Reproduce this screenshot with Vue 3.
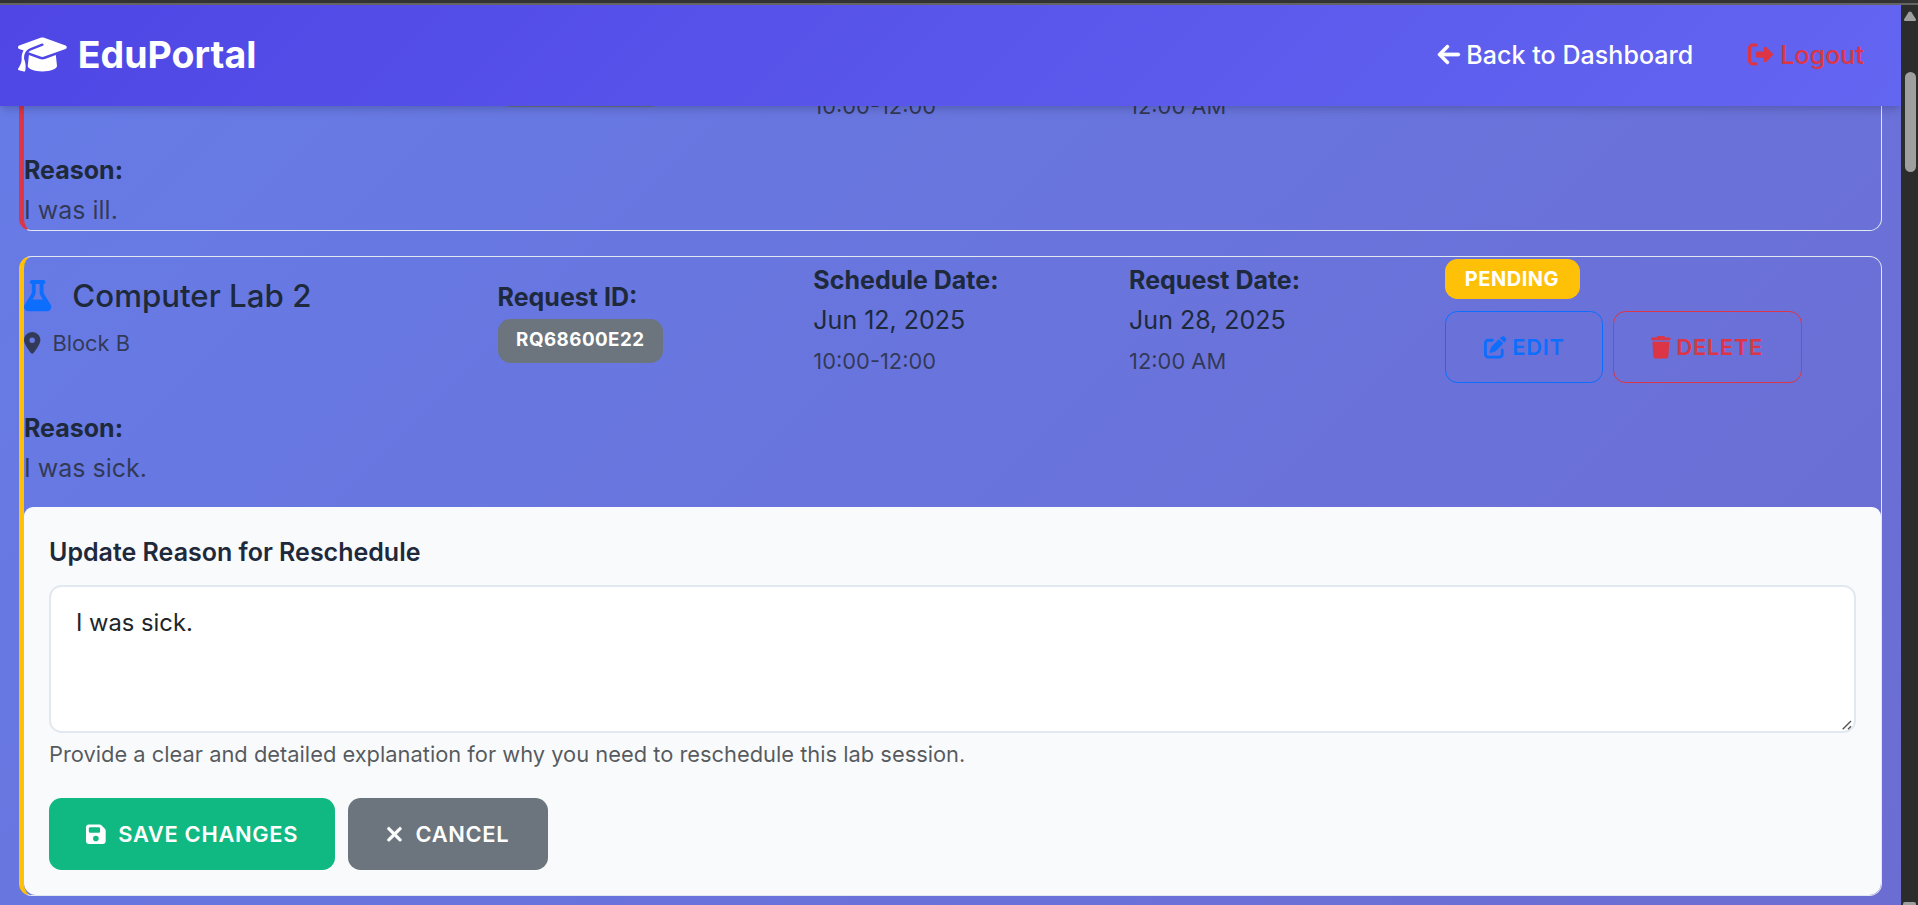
<script setup>
import { h, ref } from 'vue'

const reason = ref('I was sick.')

const shapes = {
  cap: [640, 'M320 32c-8.1 0-16.1 1.4-23.7 4.1L15.8 137.4C6.3 140.9 0 149.9 0 160s6.3 19.1 15.8 22.6l57.9 20.9C57.3 229.3 48 259.8 48 291.9v28.1c0 28.4-10.8 57.7-22.3 80.8c-6.5 13-13.9 25.8-22.5 37.6C0 442.7-.9 448.3 .9 453.4s6 8.9 11.2 10.2l64 16c4.2 1.1 8.7 .3 12.4-2s6.3-6.1 7.1-10.4c8.6-42.8 4.3-81.2-2.1-108.7C90.3 344.3 86 329.8 80 316.5V291.9c0-30.2 10.2-58.7 27.9-81.5c12.9-15.5 29.6-28 49.2-35.7l157-61.7c8.2-3.2 17.5 .8 20.7 9s-.8 17.5-9 20.7l-157 61.7c-12.4 4.9-23.3 12.4-32.2 21.6l159.6 57.6c7.6 2.7 15.6 4.1 23.7 4.1s16.1-1.4 23.7-4.1L624.2 182.6c9.5-3.4 15.8-12.5 15.8-22.6s-6.3-19.1-15.8-22.6L343.7 36.1C336.1 33.4 328.1 32 320 32zM128 408c0 35.3 86 72 192 72s192-36.7 192-72L496.7 262.6 354.5 314c-11.1 4-22.8 6-34.5 6s-23.5-2-34.5-6L143.3 262.6 128 408z'],
  back: [448, 'M9.4 233.4c-12.5 12.5-12.5 32.8 0 45.3l160 160c12.5 12.5 32.8 12.5 45.3 0s12.5-32.8 0-45.3L109.2 288 416 288c17.7 0 32-14.3 32-32s-14.3-32-32-32l-306.7 0L214.6 118.6c12.5-12.5 12.5-32.8 0-45.3s-32.8-12.5-45.3 0l-160 160z'],
  logout: [512, 'M377.9 105.9L500.7 228.7c7.2 7.2 11.3 17.1 11.3 27.3s-4.1 20.1-11.3 27.3L377.9 406.1c-6.4 6.4-15 9.9-24 9.9c-18.7 0-33.9-15.2-33.9-33.9l0-62.1-128 0c-17.7 0-32-14.3-32-32l0-64c0-17.7 14.3-32 32-32l128 0 0-62.1c0-18.7 15.2-33.9 33.9-33.9c9 0 17.6 3.6 24 9.9zM160 96L96 96c-17.7 0-32 14.3-32 32l0 256c0 17.7 14.3 32 32 32l64 0c17.7 0 32 14.3 32 32s-14.3 32-32 32l-64 0c-53 0-96-43-96-96L0 128C0 75 43 32 96 32l64 0c17.7 0 32 14.3 32 32s-14.3 32-32 32z'],
  flask: [448, 'M288 0H160 128C110.3 0 96 14.3 96 32s14.3 32 32 32V196.8c0 11.8-3.3 23.5-9.5 33.5L10.3 406.2C3.6 417.2 0 429.7 0 442.6C0 480.9 31.1 512 69.4 512H378.6c38.3 0 69.4-31.1 69.4-69.4c0-12.8-3.6-25.4-10.3-36.4L329.5 230.4c-6.2-10.1-9.5-21.7-9.5-33.5V64c17.7 0 32-14.3 32-32s-14.3-32-32-32H288zM192 196.8V64h64V196.8c0 23.7 6.6 46.9 19 67.1L309.5 320h-171L173 263.9c12.4-20.2 19-43.4 19-67.1z'],
  pin: [384, 'M215.7 499.2C267 435 384 279.4 384 192C384 86 298 0 192 0S0 86 0 192c0 87.4 117 243 168.3 307.2c12.3 15.3 35.1 15.3 47.4 0zM192 128a64 64 0 1 1 0 128 64 64 0 1 1 0-128z'],
  edit: [512, 'M471.6 21.7c-21.9-21.9-57.3-21.9-79.2 0L362.3 51.7l97.9 97.9 30.1-30.1c21.9-21.9 21.9-57.3 0-79.2L471.6 21.7zm-299.2 220c-6.1 6.1-10.8 13.6-13.5 21.9l-29.6 88.8c-2.9 8.6-.6 18.1 5.8 24.6s15.9 8.7 24.6 5.8l88.8-29.6c8.2-2.7 15.7-7.4 21.9-13.5L437.7 172.3 339.7 74.3 172.4 241.7zM96 64C43 64 0 107 0 160V416c0 53 43 96 96 96H352c53 0 96-43 96-96V320c0-17.7-14.3-32-32-32s-32 14.3-32 32v96c0 17.7-14.3 32-32 32H96c-17.7 0-32-14.3-32-32V160c0-17.7 14.3-32 32-32h96c17.7 0 32-14.3 32-32s-14.3-32-32-32H96z'],
  trash: [448, 'M135.2 17.7L128 32H32C14.3 32 0 46.3 0 64S14.3 96 32 96H416c17.7 0 32-14.3 32-32s-14.3-32-32-32H320l-7.2-14.3C307.4 6.8 296.3 0 284.2 0H163.8c-12.1 0-23.2 6.8-28.6 17.7zM416 128H32L53.2 467c1.6 25.3 22.6 45 47.9 45H346.9c25.3 0 46.3-19.7 47.9-45L416 128z'],
  save: [448, 'M64 32C28.7 32 0 60.7 0 96V416c0 35.3 28.7 64 64 64H384c35.3 0 64-28.7 64-64V173.3c0-17-6.7-33.3-18.7-45.3L352 50.7C340 38.7 323.7 32 306.7 32H64zm0 96c0-17.7 14.3-32 32-32H288c17.7 0 32 14.3 32 32v64c0 17.7-14.3 32-32 32H96c-17.7 0-32-14.3-32-32V128zM224 288a64 64 0 1 1 0 128 64 64 0 1 1 0-128z'],
  close: [384, 'M342.6 150.6c12.5-12.5 12.5-32.8 0-45.3s-32.8-12.5-45.3 0L192 210.7 86.6 105.4c-12.5-12.5-32.8-12.5-45.3 0s-12.5 32.8 0 45.3L146.7 256 41.4 361.4c-12.5 12.5-12.5 32.8 0 45.3s32.8 12.5 45.3 0L192 301.3 297.4 406.6c12.5 12.5 32.8 12.5 45.3 0s12.5-32.8 0-45.3L237.3 256 342.6 150.6z'],
}

const Icon = ({ name, bold }) =>
  h('svg', {
    viewBox: `0 0 ${shapes[name][0]} 512`, height: '1em', fill: 'currentColor', 'aria-hidden': 'true',
    stroke: bold ? 'currentColor' : 'none', 'stroke-width': 14, overflow: 'visible',
  }, [h('path', { d: shapes[name][1] })])
Icon.props = ['name', 'bold']
</script>

<template>
  <div class="window">
    <div class="frame-edge"></div>
    <div class="body">
      <div class="page">
        <header class="navbar">
          <a class="brand"><span class="brand-icon"><Icon name="cap" /></span><span>EduPortal</span></a>
          <nav class="links">
            <a class="link"><Icon name="back" :bold="true" /><span>Back to Dashboard</span></a>
            <a class="link logout"><Icon name="logout" /><span>Logout</span></a>
          </nav>
        </header>

        <main class="list">
          <article class="card rejected">
            <div class="row">
              <div></div>
              <div class="col-id">
                <div class="badge-id"></div>
              </div>
              <div class="col-date">
                <div class="small">10:00-12:00</div>
              </div>
              <div class="col-date">
                <div class="small">12:00 AM</div>
              </div>
              <div></div>
            </div>
            <div class="reason">
              <strong>Reason:</strong>
              <p>I was ill.</p>
            </div>
          </article>

          <article class="card pending">
            <div class="row">
              <div class="col-lab">
                <h5 class="lab"><span class="flask"><Icon name="flask" /></span><span>Computer Lab 2</span></h5>
                <div class="place"><Icon name="pin" /><span>Block B</span></div>
              </div>
              <div class="col-id">
                <strong>Request ID:</strong>
                <div class="badge-id">RQ68600E22</div>
              </div>
              <div class="col-date">
                <strong>Schedule Date:</strong>
                <div>Jun 12, 2025</div>
                <div class="small">10:00-12:00</div>
              </div>
              <div class="col-date">
                <strong>Request Date:</strong>
                <div>Jun 28, 2025</div>
                <div class="small">12:00 AM</div>
              </div>
              <div class="col-actions">
                <div class="status">PENDING</div>
                <div class="actions">
                  <button class="btn outline edit"><Icon name="edit" /><span class="btn-text">EDIT</span></button>
                  <button class="btn outline delete"><Icon name="trash" /><span class="btn-text">DELETE</span></button>
                </div>
              </div>
            </div>
            <div class="reason">
              <strong>Reason:</strong>
              <p>I was sick.</p>
            </div>
            <form class="form" @submit.prevent>
              <label class="label" for="reason">Update Reason for Reschedule</label>
              <div class="field">
                <textarea id="reason" v-model="reason" class="textarea"></textarea>
                <svg class="grip" viewBox="0 0 10 10"><path d="M.7 9.3 9 1M6 9.3 9 6.3" stroke="#555" stroke-width="1.4" fill="none" /></svg>
              </div>
              <div class="help">Provide a clear and detailed explanation for why you need to reschedule this lab session.</div>
              <div class="form-actions">
                <button class="btn solid save"><Icon name="save" /><span class="btn-text">SAVE CHANGES</span></button>
                <button class="btn solid cancel"><Icon name="close" :bold="true" /><span class="btn-text">CANCEL</span></button>
              </div>
            </form>
          </article>
        </main>
      </div>
      <div class="scrollbar">
        <svg class="arrow" viewBox="0 0 14 11"><path d="M5.6 1.2Q7 -.4 8.4 1.2L12.8 8Q13.4 10 12 10H2Q.6 10 1.2 8Z" fill="#9f9f9f" /></svg>
        <div class="thumb"></div>
        <div class="arrow-down"></div>
      </div>
    </div>
  </div>
</template>

<style>
body { margin: 0; overflow: hidden; }
</style>

<style scoped>
* { box-sizing: border-box; }
.window {
  width: 1918px; height: 905px; overflow: hidden;
  display: flex; flex-direction: column;
  font: 400 25px/40px Inter, "Liberation Sans", sans-serif; color: #1e293b;
}
.frame-edge { height: 5px; flex: none; background: #333; border-bottom: 2px solid #646464; }
.body { flex: 1; min-height: 0; display: flex; }
.page {
  flex: 1; min-width: 0; overflow: hidden;
  background: linear-gradient(135deg, #667eea 0%, #764ba2 100%) 0 -430px / 1901px 7600px no-repeat;
}
.navbar {
  position: relative; z-index: 2; height: 101px; padding: 0 37px 2px 18px;
  display: flex; align-items: center; justify-content: space-between;
  color: #fff; background: linear-gradient(135deg, #4f46e5, #6366f1);
  box-shadow: 0 6px 9px -2px rgba(0, 0, 0, .12), 0 3px 6px -2px rgba(0, 0, 0, .1);
}
.brand { display: flex; align-items: center; gap: 11px; font-size: 37.5px; font-weight: 700; }
.brand-icon { display: flex; font-size: 39px; }
.links { display: flex; gap: 55px; }
.link { display: flex; align-items: center; gap: 6px; font-weight: 500; letter-spacing: .05px; }
.logout { color: #dc3545; gap: 7px; }
.list { margin-top: -101px; padding: 0 19px; display: flex; flex-direction: column; gap: 25px; }
.card { border: 1px solid #e2e8f0; border-left-width: 5px; border-radius: 12.5px; }
.rejected { border-left-color: #dc3545; }
.pending { border-left-color: #ffc107; }
.row {
  display: grid; grid-template-columns: 473.6px 315.75px 315.75px 315.75px 1fr;
  height: 126px; align-items: center;
}
.rejected .row { height: 119px; align-items: end; }
.rejected .badge-id { margin-bottom: 18px; width: 165px; }
strong { display: block; font-weight: 700; }
.small { font-size: 21.875px; color: rgba(33, 37, 41, .75); padding-top: 1px; height: 40px; }
.lab { margin: 0 0 7px; padding-top: 1px; display: flex; align-items: center; font-size: 31.25px; font-weight: 500; line-height: 37.5px; gap: 21px; }
.flask { display: flex; color: #0d6efd; margin-bottom: 2px; }
.place { display: flex; align-items: center; gap: 12px; font-size: 21.875px; color: rgba(33, 37, 41, .75); }
.badge-id {
  width: max-content; height: 44px; margin-top: 2px; padding: 0 18px 0 18.5px; border-radius: 12.5px;
  background: #6c757d; color: #fff; font-size: 18.75px; font-weight: 700; letter-spacing: .47px; line-height: 41px;
}
.status {
  width: 135px; height: 40px; padding: 0 0 0 20px; border-radius: 12.5px;
  background: #ffc107; color: #fff; font-size: 20px; font-weight: 700; letter-spacing: .5px; line-height: 40px;
}
.col-actions { align-self: start; padding-top: 2px; }
.actions { display: flex; gap: 10px; margin-top: 12px; }
.btn {
  height: 72px; padding: 0 0 0 38px; border-radius: 12.5px; border: 0; color: #fff;
  display: flex; align-items: center; font: 600 22.5px/36px Inter, sans-serif; white-space: nowrap;
}
.btn svg { flex: none; }
.btn-text { font-size: 21.875px; letter-spacing: .7px; }
.outline { background: transparent; border: 1px solid currentColor; gap: 6px; }
.edit { color: #0d6efd; width: 158px; }
.delete { color: #dc3545; width: 189px; padding-left: 37px; }
.reason { padding-top: 25px; }
.reason p { margin: 0; color: rgba(33, 37, 41, .75); }
.form {
  margin-top: 19px; height: 388px; padding: 25px; display: flex; flex-direction: column;
  background: #f8fafc; border-radius: 9px 9px 12px 12px;
}
.label { font-weight: 600; height: 40px; margin-bottom: 13px; }
.field { position: relative; flex: none; }
.textarea {
  display: block; width: 100%; height: 148px; margin: 0; padding: 17px 25px; resize: none;
  border: 2px solid #e2e8f0; border-radius: 12.5px; background: #fff; color: #212529;
  font: 400 23.75px/38px Inter, sans-serif; outline: none;
}
.grip { position: absolute; right: 4px; bottom: 3px; width: 10px; height: 10px; }
.help { font-size: 21.875px; line-height: 35px; margin-top: 4px; color: rgba(33, 37, 41, .75); }
.form-actions { display: flex; gap: 13px; margin-top: 26px; }
.solid { gap: 12.5px; }
.save { background: #10b981; padding-left: 37px; width: 286px; }
.cancel { background: #6c757d; width: 200px; }
.scrollbar { width: 17px; background: #2c2c2c; display: flex; flex-direction: column; align-items: center; }
.arrow { width: 14px; height: 11px; margin: 6px 0 50px; flex: none; }
.thumb { width: 11px; height: 100px; border-radius: 6px; background: #9f9f9f; margin-left: 1px; flex: none; }
.arrow-down { width: 13px; height: 8px; margin-top: 730px; border-radius: 2px; background: #9f9f9f; flex: none; }
</style>
